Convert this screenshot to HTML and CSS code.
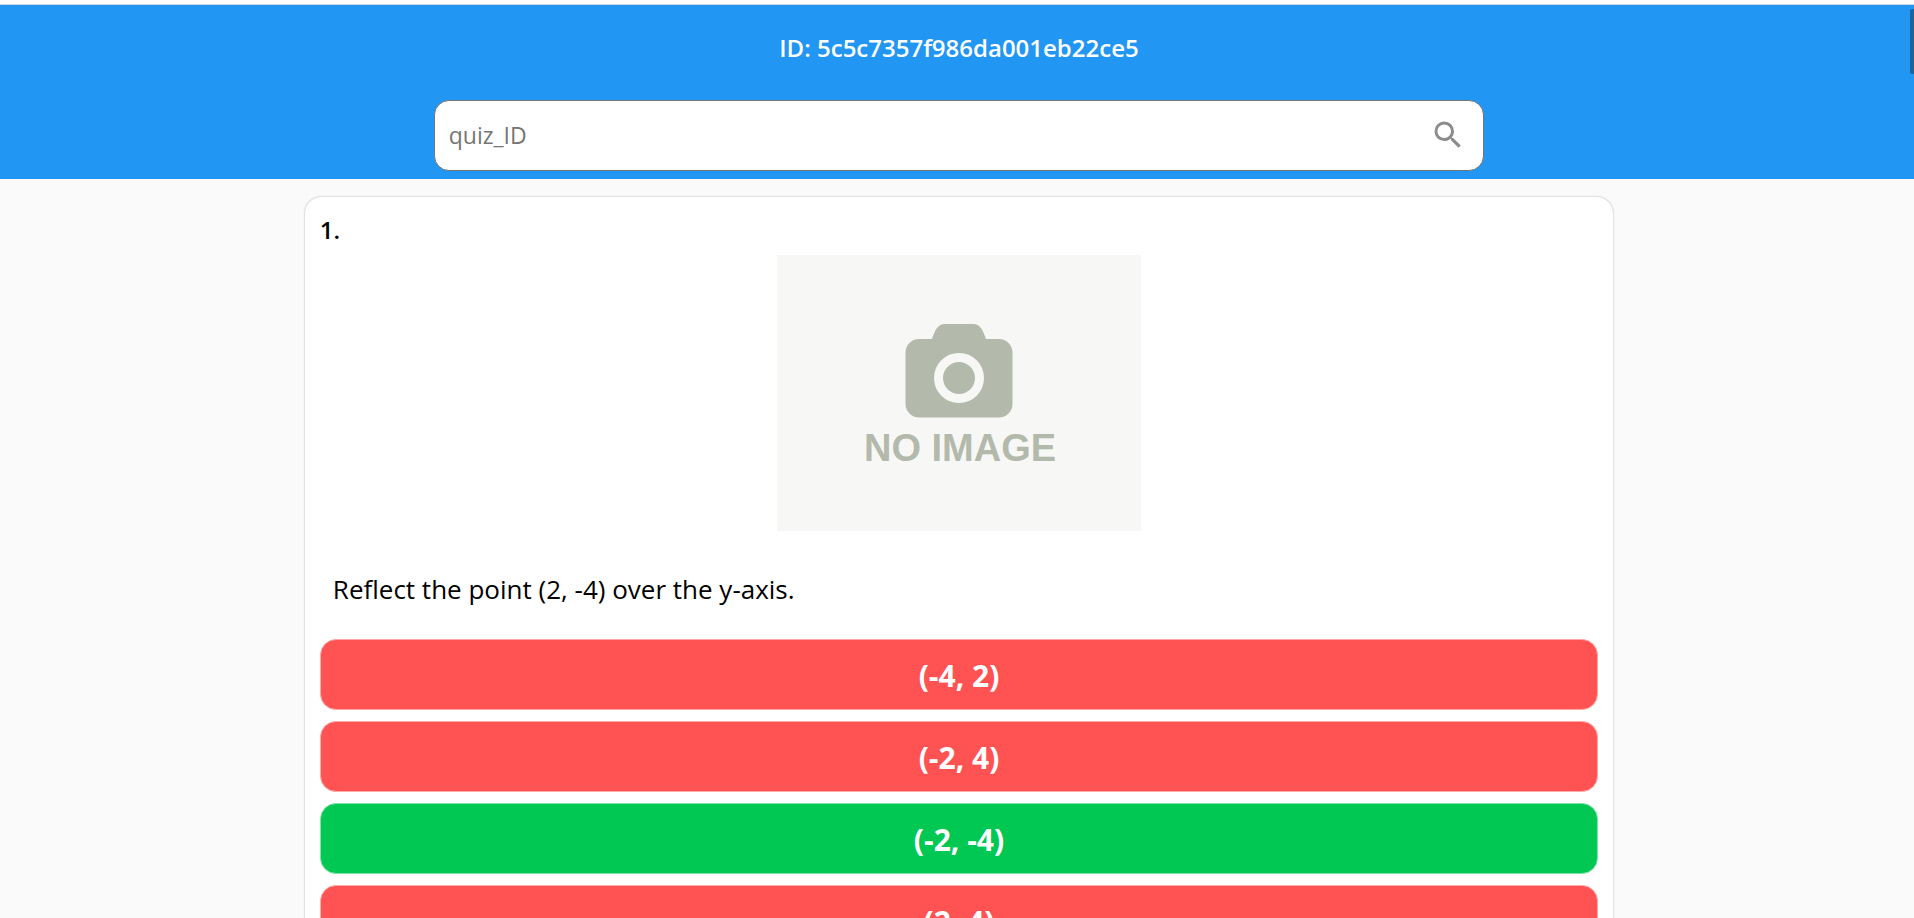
FILE: index.html
```html
<!DOCTYPE html>
<html lang="en">
<head>
<meta charset="utf-8">
<meta name="viewport" content="width=device-width, initial-scale=1">
<title>Quiz</title>
<link rel="stylesheet" href="styles.css">
</head>
<body>
<div class="scroll-thumb" aria-hidden="true"></div>
<header class="header">
  <h1 class="title">ID: 5c5c7357f986da001eb22ce5</h1>
  <form class="search" role="search">
    <input class="search-input" type="text" placeholder="quiz_ID" aria-label="quiz_ID">
    <button class="search-button" type="button" aria-label="Search">
      <svg class="search-icon" viewBox="0 0 24 24" aria-hidden="true"><path fill="currentColor" d="M15.5 14h-.79l-.28-.27A6.471 6.471 0 0 0 16 9.5 6.5 6.5 0 1 0 9.5 16c1.61 0 3.09-.59 4.23-1.57l.27.28v.79l5 4.99L20.49 19l-4.99-5zm-6 0C7.01 14 5 11.99 5 9.5S7.01 5 9.5 5 14 7.01 14 9.5 11.99 14 9.5 14z"/></svg>
    </button>
  </form>
</header>
<main class="content">
  <section class="card">
    <h2 class="number">1.</h2>
    <svg class="picture" viewBox="0 0 364 276" role="img" aria-label="No image">
      <rect width="364" height="276" fill="#f7f8f6"/>
      <path fill="#b3b9ab" d="M142 84h13C158 76 160 69 168 69h28c8 0 10 7 13 15h13a13.500 13.500 0 0 1 13.500 13.500v51.500a13.500 13.500 0 0 1-13.500 13.500h-80a13.500 13.500 0 0 1-13.500-13.500v-51.500a13.500 13.500 0 0 1 13.500-13.500z"/>
      <circle cx="182" cy="123" r="20.500" fill="none" stroke="#f7f8f6" stroke-width="9"/>
      <text class="picture-text" x="183" y="206" text-anchor="middle">NO IMAGE</text>
    </svg>
    <p class="question">Reflect the point (2, -4) over the y-axis.</p>
    <div class="answers">
      <button class="answer" type="button">(-4, 2)</button>
      <button class="answer" type="button">(-2, 4)</button>
      <button class="answer answer-correct" type="button">(-2, -4)</button>
      <button class="answer" type="button">(2, 4)</button>
    </div>
  </section>
</main>
</body>
</html>
```
FILE: styles.css
```css
* {
  box-sizing: border-box;
}

html {
  height: 100%;
  overflow: hidden;
}

body {
  height: 100%;
  margin: 0;
  overflow: hidden;
  background: #fafafa;
  color: #000;
  font-family: "Segoe UI", "Open Sans", "Noto Sans", sans-serif;
}

.header {
  display: flex;
  flex-direction: column;
  align-items: center;
  padding: 24px 0 8px 4px;
  border-top: 4px solid #fff;
  background: #2196f3;
  box-shadow: inset 0 1px 0 #c8d4de;
}

.title {
  margin: 0 0 32px;
  color: #fff;
  font-size: 24px;
  font-weight: 600;
  line-height: 40px;
}

.search {
  display: flex;
  align-items: center;
  width: 55%;
  height: 71px;
  padding-right: 17px;
  border: 1px solid #757575;
  border-radius: 15px;
  background: #fff;
}

.search-input {
  flex: 1;
  min-width: 0;
  padding: 0 14px 2px;
  border: 0;
  outline: 0;
  background: transparent;
  font: inherit;
  font-size: 23px;
}

.search-input::placeholder {
  color: #757575;
  opacity: 1;
}

.search-button {
  display: flex;
  padding: 0 0 1px;
  border: 0;
  background: none;
  color: #8c8c8c;
}

.search-icon {
  width: 36px;
  height: 36px;
}

.content {
  display: flex;
  justify-content: center;
  padding: 18px 0 18px 4px;
}

.card {
  display: flex;
  flex-direction: column;
  width: 68.5%;
  padding: 15px;
  border-radius: 16px;
  background: #fff;
  box-shadow: 0 0 2px rgba(0, 0, 0, 0.35);
}

.number {
  margin: 0 0 7px;
  font-size: 24px;
  font-weight: 600;
  line-height: 36px;
}

.picture {
  align-self: center;
  width: 364px;
  height: 276px;
}

.picture-text {
  fill: #b3b9ab;
  font-family: "Liberation Sans", Arial, sans-serif;
  font-size: 38px;
  font-weight: 700;
}

.question {
  margin: 38px 13px 30px;
  font-size: 26px;
  line-height: 40px;
}

.answers {
  display: flex;
  flex-direction: column;
  gap: 11px;
}

.answer {
  height: 71px;
  padding: 2px 0 0;
  border: 1px solid #ffa9a9;
  border-radius: 16px;
  background: #ff5252;
  color: #fff;
  font: inherit;
  font-size: 30px;
  font-weight: 700;
}

.answer-correct {
  border-color: #80e4a8;
  background: #00c853;
}

.scroll-thumb {
  position: absolute;
  top: 9px;
  right: 0;
  width: 4px;
  height: 65px;
  border-radius: 2px 0 0 2px;
  background: #1b64a0;
}
```
